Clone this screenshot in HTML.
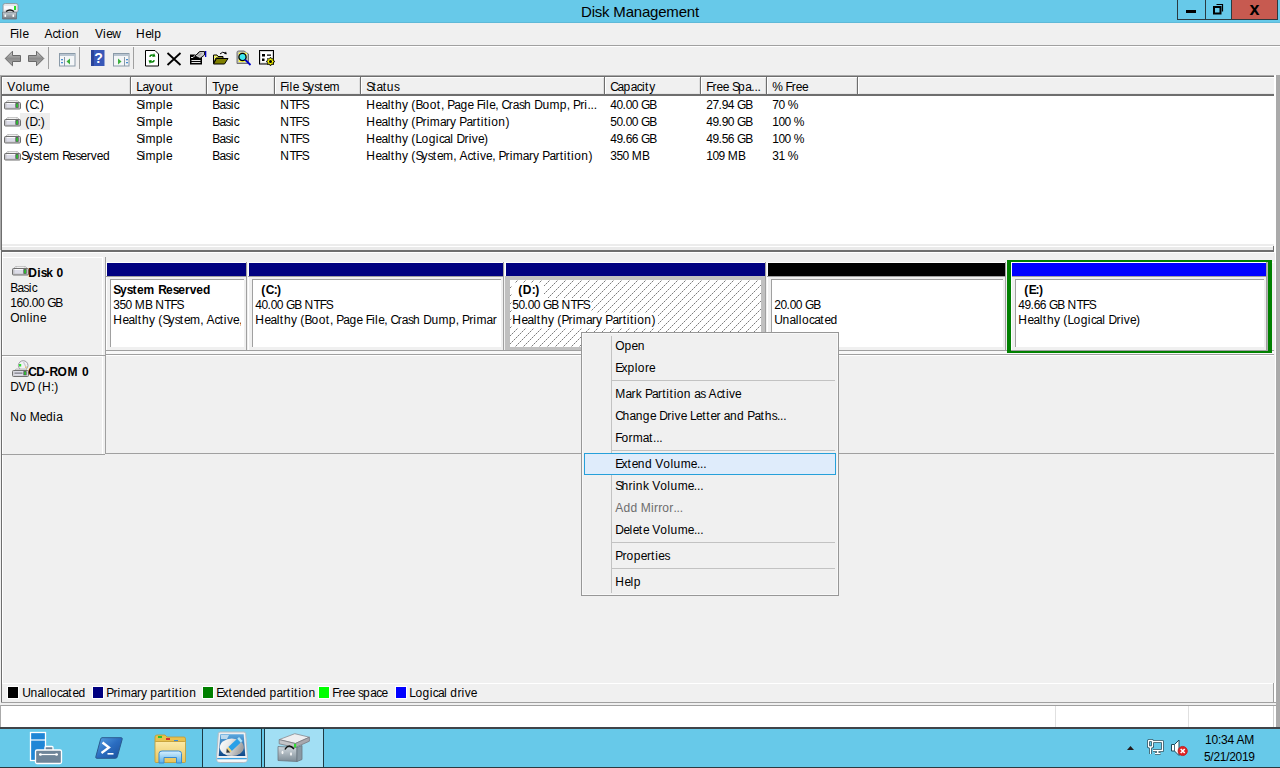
<!DOCTYPE html>
<html><head><meta charset="utf-8">
<style>
*{margin:0;padding:0;box-sizing:border-box}
html,body{width:1280px;height:768px;overflow:hidden;background:#f0f0f0;font-family:"Liberation Sans",sans-serif;font-size:12px;color:#000}
.a{position:absolute}
.t{position:absolute;white-space:nowrap;line-height:14px;font-size:12px}
.b{font-weight:bold}
svg{position:absolute;overflow:visible}
</style></head><body>

<div class="a" style="left:0px;top:0px;width:1280px;height:23px;background:#67c9e9"></div>
<div class="a" style="left:0px;top:22px;width:1280px;height:1px;background:#5fb9d8"></div>
<div class="t" style="left:581px;top:3px;font-size:15px;line-height:18px;letter-spacing:-0.2px">Disk Management</div>
<div class="a" style="left:1177px;top:0px;width:28px;height:20px;border-left:1px solid #2a3a40;border-bottom:1px solid #2a3a40;background:#67c9e9"></div>
<div class="a" style="left:1205px;top:0px;width:26px;height:20px;border-left:1px solid #2a3a40;border-bottom:1px solid #2a3a40;background:#67c9e9"></div>
<div class="a" style="left:1231px;top:0px;width:47px;height:20px;border:1px solid #2a3a40;border-top:none;background:#c75a50"></div>
<div class="a" style="left:1186px;top:10px;width:10px;height:3px;background:#000"></div>
<svg style="left:1212px;top:3px" width="13" height="13"><path d="M4.5 1.5 H10.5 V8.5" fill="none" stroke="#000" stroke-width="1.2"/><rect x="2" y="4" width="6.5" height="6.5" fill="none" stroke="#000" stroke-width="2"/></svg>
<div class="t b" style="left:1249.5px;top:-1px;font-size:18px;line-height:20px;font-weight:bold">x</div>
<svg style="left:1px;top:2px" width="19" height="18">
<defs><linearGradient id="tig" x1="0" y1="0" x2="0" y2="1"><stop offset="0" stop-color="#c8d0d6"/><stop offset="1" stop-color="#707880"/></linearGradient></defs>
<path d="M1.5 10 H15.5 V17 H1.5Z" fill="url(#tig)" stroke="#68727a" stroke-width="0.8"/>
<rect x="3.5" y="12.5" width="1.6" height="2.4" fill="#fff"/><rect x="11.5" y="12.5" width="1.6" height="2.4" fill="#fff"/>
<path d="M2 3 Q2 1.5 4.5 1.5 H14.5 Q17 1.5 17 3 V9 Q17 10 16 10 H2.5 Q2 10 2 9Z" fill="#e4e6ea" stroke="#8a9096" stroke-width="0.8"/>
<path d="M3 4 H14 V7.5 H3Z" fill="#f8f8fc"/>
<path d="M5 9.5 Q9 6.5 13 9.5" fill="none" stroke="#111" stroke-width="1.4"/>
<rect x="13" y="4" width="2" height="4" fill="#28e028"/>
</svg>
<div class="a" style="left:0px;top:23px;width:1280px;height:22px;background:#f0f0f0"></div>
<div class="a" style="left:0px;top:45px;width:1280px;height:1px;background:#a0a0a0"></div>
<div class="a" style="left:0px;top:46px;width:1280px;height:1px;background:#fff"></div>
<div class="t" style="left:10.0px;top:27px;"><span style="letter-spacing:-1.20px">F</span><span style="letter-spacing:0.45px">il</span><span style="letter-spacing:-0.55px">e</span></div>
<div class="t" style="left:44.5px;top:27px;"><span style="letter-spacing:0.10px">A</span><span style="letter-spacing:-0.90px">c</span><span style="letter-spacing:0.80px">t</span><span style="letter-spacing:0.45px">ion</span></div>
<div class="t" style="left:95.0px;top:27px;"><span style="letter-spacing:0.10px">V</span><span style="letter-spacing:0.45px">i</span><span style="letter-spacing:-0.55px">e</span><span style="letter-spacing:0.45px">w</span></div>
<div class="t" style="left:136.0px;top:27px;"><span style="letter-spacing:0.45px">H</span><span style="letter-spacing:-0.55px">e</span><span style="letter-spacing:0.45px">lp</span></div>
<div class="a" style="left:48px;top:47px;width:1px;height:22px;background:#a0a0a0"></div>
<div class="a" style="left:79px;top:47px;width:1px;height:22px;background:#a0a0a0"></div>
<div class="a" style="left:133px;top:47px;width:1px;height:22px;background:#a0a0a0"></div>
<svg style="left:4px;top:50px" width="18" height="17"><defs><linearGradient id="arg" x1="0" y1="0" x2="0" y2="1"><stop offset="0" stop-color="#d0d0d0"/><stop offset="0.5" stop-color="#8c8c8c"/><stop offset="1" stop-color="#b0b0b0"/></linearGradient></defs><path d="M1.2 8.5 L8.5 1.2 V5.5 H16.5 V11.5 H8.5 V15.8 Z" fill="url(#arg)" stroke="#6a6a6a" stroke-width="1"/></svg>
<svg style="left:27px;top:50px" width="18" height="17"><path d="M16.8 8.5 L9.5 1.2 V5.5 H1.5 V11.5 H9.5 V15.8 Z" fill="url(#arg)" stroke="#6a6a6a" stroke-width="1"/></svg>
<svg style="left:59px;top:53px" width="17" height="14"><rect x="0.5" y="0.5" width="15.5" height="12.5" fill="#f4f6f8" stroke="#8a9aa8"/><rect x="1" y="1" width="15" height="2" fill="#b8c4d0"/><line x1="5.5" y1="4" x2="5.5" y2="13" stroke="#8a9aa8"/><rect x="2" y="6" width="2" height="1.3" fill="#4a8fd0"/><rect x="2" y="9" width="2" height="1.3" fill="#4a8fd0"/><path d="M11 5.5 L7.5 8.5 L11 11.5Z" fill="#3cb03c"/></svg>
<svg style="left:91px;top:50px" width="14" height="16"><rect x="0" y="0" width="13.5" height="16" fill="#3858b8"/><rect x="0" y="0" width="3" height="16" fill="#2a449a"/><text x="7.5" y="13" font-family="Liberation Sans" font-size="14" font-weight="bold" fill="#fff" text-anchor="middle">?</text></svg>
<svg style="left:113px;top:53px" width="17" height="14"><rect x="0.5" y="0.5" width="15.5" height="12.5" fill="#f4f6f8" stroke="#8a9aa8"/><rect x="1" y="1" width="15" height="2" fill="#b8c4d0"/><line x1="11.5" y1="4" x2="11.5" y2="13" stroke="#8a9aa8"/><rect x="13" y="6" width="2" height="1.3" fill="#4a8fd0"/><rect x="13" y="9" width="2" height="1.3" fill="#4a8fd0"/><path d="M5 5.5 L8.5 8.5 L5 11.5Z" fill="#3cb03c"/></svg>
<svg style="left:145px;top:50px" width="15" height="17"><path d="M0.5 0.5 H10 L13.5 4 V16 H0.5 Z" fill="#fff" stroke="#000" stroke-width="1"/><path d="M4 6.5 Q5 3.5 8.5 4.5 L9 3 L10.5 6.5 L7 7 L8 5.8 Q6 5.2 5.5 7z" fill="#008000"/><path d="M10 10.5 Q9 13.5 5.5 12.5 L5 14 L3.5 10.5 L7 10 L6 11.2 Q8 11.8 8.5 10z" fill="#008000"/></svg>
<svg style="left:166px;top:52px" width="16" height="14"><path d="M1.5 1 L14.5 13 M14.5 1 L1.5 13" stroke="#000" stroke-width="1.8"/></svg>
<svg style="left:189px;top:50px" width="18" height="16">
<rect x="1" y="4.5" width="12" height="10" fill="#000"/>
<path d="M2.5 10.5 H11.5 M2.5 12.5 H11.5" stroke="#fff" stroke-width="0.9"/>
<path d="M2 7.5 L4 7.5 L8.5 3 L11 5.5 L10 7.5 H11.5" fill="none" stroke="#fff" stroke-width="0.9"/>
<path d="M6 6 L10.5 1.5 H15.5 V5 L11 8.5Z" fill="#c8c8c8" stroke="#000" stroke-width="0.9"/>
<path d="M8 5 L11 2 M9.5 6 L12.5 3" stroke="#777" stroke-width="0.8"/>
<rect x="16" y="1" width="1.3" height="6" fill="#0000c0"/>
</svg>
<svg style="left:212px;top:50px" width="18" height="16">
<defs><pattern id="ydot" width="2" height="2" patternUnits="userSpaceOnUse"><rect width="2" height="2" fill="#ffff40"/><rect width="1" height="1" fill="#d8d8d8"/></pattern></defs>
<path d="M1.5 5 H5 L6 6.5 H11 V8 H4 L1.5 13.5Z" fill="url(#ydot)" stroke="#000" stroke-width="1"/>
<path d="M1.5 14 L4.5 8.5 H16 L12.5 14Z" fill="#808000" stroke="#000" stroke-width="1"/>
<path d="M8 4 Q10.5 1 13.5 3" fill="none" stroke="#000" stroke-width="1"/>
<path d="M12 4 L14.8 4.2 L14 1.6Z" fill="#000"/>
</svg>
<svg style="left:236px;top:50px" width="17" height="17">
<path d="M1 2.5 Q1 1 2.5 1 H8 L12.5 4 V13.5 H1Z" fill="#b8b8b8" stroke="#666" stroke-width="0.9"/>
<rect x="2.5" y="2.5" width="8.5" height="9.5" fill="url(#ydot)"/>
<circle cx="6.5" cy="7" r="3.6" fill="#40e8f0" stroke="#000" stroke-width="1.3"/>
<path d="M9 9.5 L14.5 15" stroke="#0000c8" stroke-width="1.8"/>
</svg>
<svg style="left:259px;top:50px" width="18" height="16">
<rect x="0.5" y="0.5" width="14" height="13.5" fill="#d4d4d4" stroke="#000" stroke-width="1"/>
<rect x="2" y="2" width="11" height="10.5" fill="#fff"/>
<path d="M3 4 H6 V6.5 H3Z M8 4.5 H12 V5.8 H8Z M3 8.5 H5.5 V11 H3Z" fill="#000"/>
<path d="M11.5 7 L12.5 9 L14.5 8.5 L14 10.5 L16 11.5 L14 12.5 L14.5 14.5 L12.5 14 L11.5 16 L10.5 14 L8.5 14.5 L9 12.5 L7 11.5 L9 10.5 L8.5 8.5 L10.5 9Z" fill="#ffff00" stroke="#000" stroke-width="0.8"/>
<circle cx="11.5" cy="11.5" r="1.5" fill="#000"/>
</svg>
<div class="a" style="left:0px;top:75px;width:1px;height:175px;background:#aaa"></div>
<div class="a" style="left:1px;top:75px;width:1275px;height:1px;background:#aaa"></div>
<div class="a" style="left:1px;top:76px;width:1274px;height:1px;background:#6e6e6e"></div>
<div class="a" style="left:1px;top:76px;width:1px;height:174px;background:#6e6e6e"></div>
<div class="a" style="left:2px;top:77px;width:1273px;height:173px;background:#fff"></div>
<div class="a" style="left:3px;top:78px;width:1271px;height:16px;background:#f0f0f0"></div>
<div class="a" style="left:2px;top:94px;width:1272px;height:2px;background:#6e6e6e"></div>
<div class="a" style="left:1274px;top:75px;width:2px;height:175px;background:#fff"></div>
<div class="a" style="left:1276px;top:75px;width:4px;height:693px;background:#aaa"></div>
<div class="a" style="left:3px;top:77px;width:1271px;height:1px;background:#fff"></div>
<div class="a" style="left:2px;top:78px;width:1px;height:16px;background:#fff"></div>
<div class="a" style="left:3px;top:93px;width:1271px;height:1px;background:#e6e6e6"></div>
<div class="a" style="left:129px;top:78px;width:1px;height:16px;background:#dcdcdc"></div>
<div class="a" style="left:130px;top:77px;width:1px;height:17px;background:#6e6e6e"></div>
<div class="a" style="left:131px;top:77px;width:1px;height:17px;background:#fff"></div>
<div class="a" style="left:205px;top:78px;width:1px;height:16px;background:#dcdcdc"></div>
<div class="a" style="left:206px;top:77px;width:1px;height:17px;background:#6e6e6e"></div>
<div class="a" style="left:207px;top:77px;width:1px;height:17px;background:#fff"></div>
<div class="a" style="left:273px;top:78px;width:1px;height:16px;background:#dcdcdc"></div>
<div class="a" style="left:274px;top:77px;width:1px;height:17px;background:#6e6e6e"></div>
<div class="a" style="left:275px;top:77px;width:1px;height:17px;background:#fff"></div>
<div class="a" style="left:359px;top:78px;width:1px;height:16px;background:#dcdcdc"></div>
<div class="a" style="left:360px;top:77px;width:1px;height:17px;background:#6e6e6e"></div>
<div class="a" style="left:361px;top:77px;width:1px;height:17px;background:#fff"></div>
<div class="a" style="left:603px;top:78px;width:1px;height:16px;background:#dcdcdc"></div>
<div class="a" style="left:604px;top:77px;width:1px;height:17px;background:#6e6e6e"></div>
<div class="a" style="left:605px;top:77px;width:1px;height:17px;background:#fff"></div>
<div class="a" style="left:699px;top:78px;width:1px;height:16px;background:#dcdcdc"></div>
<div class="a" style="left:700px;top:77px;width:1px;height:17px;background:#6e6e6e"></div>
<div class="a" style="left:701px;top:77px;width:1px;height:17px;background:#fff"></div>
<div class="a" style="left:765px;top:78px;width:1px;height:16px;background:#dcdcdc"></div>
<div class="a" style="left:766px;top:77px;width:1px;height:17px;background:#6e6e6e"></div>
<div class="a" style="left:767px;top:77px;width:1px;height:17px;background:#fff"></div>
<div class="a" style="left:856px;top:78px;width:1px;height:16px;background:#dcdcdc"></div>
<div class="a" style="left:857px;top:77px;width:1px;height:17px;background:#6e6e6e"></div>
<div class="a" style="left:858px;top:77px;width:1px;height:17px;background:#fff"></div>
<div class="t" style="left:7.3px;top:80px;"><span style="letter-spacing:0.10px">V</span><span style="letter-spacing:0.45px">olu</span><span style="letter-spacing:0.10px">m</span><span style="letter-spacing:-0.55px">e</span></div>
<div class="t" style="left:136.3px;top:80px;"><span style="letter-spacing:-0.55px">La</span><span style="letter-spacing:0.10px">y</span><span style="letter-spacing:0.45px">ou</span><span style="letter-spacing:0.80px">t</span></div>
<div class="t" style="left:212.3px;top:80px;"><span style="letter-spacing:-1.20px">T</span><span style="letter-spacing:0.10px">y</span><span style="letter-spacing:0.45px">p</span><span style="letter-spacing:-0.55px">e</span></div>
<div class="t" style="left:280.3px;top:80px;"><span style="letter-spacing:-1.20px">F</span><span style="letter-spacing:0.45px">il</span><span style="letter-spacing:-0.55px">e</span><span style="letter-spacing:-0.20px"> </span><span style="letter-spacing:-1.90px">S</span><span style="letter-spacing:0.10px">y</span><span style="letter-spacing:-0.90px">s</span><span style="letter-spacing:0.80px">t</span><span style="letter-spacing:-0.55px">e</span><span style="letter-spacing:0.10px">m</span></div>
<div class="t" style="left:366.3px;top:80px;"><span style="letter-spacing:-1.90px">S</span><span style="letter-spacing:0.80px">t</span><span style="letter-spacing:-0.55px">a</span><span style="letter-spacing:0.80px">t</span><span style="letter-spacing:0.45px">u</span><span style="letter-spacing:-0.90px">s</span></div>
<div class="t" style="left:610.3px;top:80px;"><span style="letter-spacing:-1.55px">C</span><span style="letter-spacing:-0.55px">a</span><span style="letter-spacing:0.45px">p</span><span style="letter-spacing:-0.55px">a</span><span style="letter-spacing:-0.90px">c</span><span style="letter-spacing:0.45px">i</span><span style="letter-spacing:0.80px">t</span><span style="letter-spacing:0.10px">y</span></div>
<div class="t" style="left:706.3px;top:80px;"><span style="letter-spacing:-1.20px">F</span><span style="letter-spacing:0.10px">r</span><span style="letter-spacing:-0.55px">ee</span><span style="letter-spacing:-0.20px"> </span><span style="letter-spacing:-1.90px">S</span><span style="letter-spacing:0.45px">p</span><span style="letter-spacing:-0.55px">a</span><span style="letter-spacing:-0.20px">...</span></div>
<div class="t" style="left:772.3px;top:80px;"><span style="letter-spacing:-0.55px">%</span><span style="letter-spacing:-0.20px"> </span><span style="letter-spacing:-1.20px">F</span><span style="letter-spacing:0.10px">r</span><span style="letter-spacing:-0.55px">ee</span></div>
<div class="a" style="left:20px;top:113px;width:30px;height:17px;background:#eeeeee"></div>
<svg style="left:4px;top:100px" width="17" height="10"><path d="M3.5 0.5 H13.5 L15.5 2.5 H1.5Z" fill="#e0e0e0" stroke="#b4b4b4" stroke-width="0.8"/><path d="M5 1.3 H12" stroke="#fafafa" stroke-width="0.8"/><rect x="0.5" y="2.5" width="16" height="6.5" rx="1" fill="#c4c4c8" stroke="#707070" stroke-width="1"/><rect x="2.5" y="3.2" width="9" height="4.3" fill="#dcdce8"/><path d="M2.5 3.5 H11.5" stroke="#fff" stroke-width="0.9"/><rect x="11.5" y="3.2" width="3" height="4.5" fill="#3a3040"/><rect x="12.3" y="3.6" width="1.5" height="3.8" fill="#30e030"/></svg>
<div class="t" style="left:25.3px;top:98px;"><span style="letter-spacing:0.10px">(</span><span style="letter-spacing:-1.55px">C</span><span style="letter-spacing:-0.20px">:</span><span style="letter-spacing:0.10px">)</span></div>
<div class="t" style="left:136.3px;top:98px;"><span style="letter-spacing:-1.90px">S</span><span style="letter-spacing:0.45px">i</span><span style="letter-spacing:0.10px">m</span><span style="letter-spacing:0.45px">pl</span><span style="letter-spacing:-0.55px">e</span></div>
<div class="t" style="left:212.3px;top:98px;"><span style="letter-spacing:-0.90px">B</span><span style="letter-spacing:-0.55px">a</span><span style="letter-spacing:-0.90px">s</span><span style="letter-spacing:0.45px">i</span><span style="letter-spacing:-0.90px">c</span></div>
<div class="t" style="left:280.3px;top:98px;"><span style="letter-spacing:0.45px">N</span><span style="letter-spacing:-1.20px">TF</span><span style="letter-spacing:-1.90px">S</span></div>
<div class="t" style="left:366.3px;top:98px;"><span style="letter-spacing:0.45px">H</span><span style="letter-spacing:-0.55px">ea</span><span style="letter-spacing:0.45px">l</span><span style="letter-spacing:0.80px">t</span><span style="letter-spacing:0.45px">h</span><span style="letter-spacing:0.10px">y</span><span style="letter-spacing:-0.20px"> </span><span style="letter-spacing:0.10px">(</span><span style="letter-spacing:-0.90px">B</span><span style="letter-spacing:0.45px">oo</span><span style="letter-spacing:0.80px">t</span><span style="letter-spacing:-0.20px">, </span><span style="letter-spacing:-0.90px">P</span><span style="letter-spacing:-0.55px">a</span><span style="letter-spacing:0.45px">g</span><span style="letter-spacing:-0.55px">e</span><span style="letter-spacing:-0.20px"> </span><span style="letter-spacing:-1.20px">F</span><span style="letter-spacing:0.45px">il</span><span style="letter-spacing:-0.55px">e</span><span style="letter-spacing:-0.20px">, </span><span style="letter-spacing:-1.55px">C</span><span style="letter-spacing:0.10px">r</span><span style="letter-spacing:-0.55px">a</span><span style="letter-spacing:-0.90px">s</span><span style="letter-spacing:0.45px">h</span><span style="letter-spacing:-0.20px"> </span><span style="letter-spacing:-0.55px">D</span><span style="letter-spacing:0.45px">u</span><span style="letter-spacing:0.10px">m</span><span style="letter-spacing:0.45px">p</span><span style="letter-spacing:-0.20px">, </span><span style="letter-spacing:-0.90px">P</span><span style="letter-spacing:0.10px">r</span><span style="letter-spacing:0.45px">i</span><span style="letter-spacing:-0.20px">...</span></div>
<div class="t" style="left:610.3px;top:98px;"><span style="letter-spacing:-0.55px">40</span><span style="letter-spacing:-0.20px">.</span><span style="letter-spacing:-0.55px">00</span><span style="letter-spacing:-0.20px"> </span><span style="letter-spacing:-1.20px">G</span><span style="letter-spacing:-0.90px">B</span></div>
<div class="t" style="left:706.3px;top:98px;"><span style="letter-spacing:-0.55px">27</span><span style="letter-spacing:-0.20px">.</span><span style="letter-spacing:-0.55px">94</span><span style="letter-spacing:-0.20px"> </span><span style="letter-spacing:-1.20px">G</span><span style="letter-spacing:-0.90px">B</span></div>
<div class="t" style="left:772.3px;top:98px;"><span style="letter-spacing:-0.55px">70</span><span style="letter-spacing:-0.20px"> </span><span style="letter-spacing:-0.55px">%</span></div>
<svg style="left:4px;top:117px" width="17" height="10"><path d="M3.5 0.5 H13.5 L15.5 2.5 H1.5Z" fill="#e0e0e0" stroke="#b4b4b4" stroke-width="0.8"/><path d="M5 1.3 H12" stroke="#fafafa" stroke-width="0.8"/><rect x="0.5" y="2.5" width="16" height="6.5" rx="1" fill="#c4c4c8" stroke="#707070" stroke-width="1"/><rect x="2.5" y="3.2" width="9" height="4.3" fill="#dcdce8"/><path d="M2.5 3.5 H11.5" stroke="#fff" stroke-width="0.9"/><rect x="11.5" y="3.2" width="3" height="4.5" fill="#3a3040"/><rect x="12.3" y="3.6" width="1.5" height="3.8" fill="#30e030"/></svg>
<div class="t" style="left:25.3px;top:115px;"><span style="letter-spacing:0.10px">(</span><span style="letter-spacing:-0.55px">D</span><span style="letter-spacing:-0.20px">:</span><span style="letter-spacing:0.10px">)</span></div>
<div class="t" style="left:136.3px;top:115px;"><span style="letter-spacing:-1.90px">S</span><span style="letter-spacing:0.45px">i</span><span style="letter-spacing:0.10px">m</span><span style="letter-spacing:0.45px">pl</span><span style="letter-spacing:-0.55px">e</span></div>
<div class="t" style="left:212.3px;top:115px;"><span style="letter-spacing:-0.90px">B</span><span style="letter-spacing:-0.55px">a</span><span style="letter-spacing:-0.90px">s</span><span style="letter-spacing:0.45px">i</span><span style="letter-spacing:-0.90px">c</span></div>
<div class="t" style="left:280.3px;top:115px;"><span style="letter-spacing:0.45px">N</span><span style="letter-spacing:-1.20px">TF</span><span style="letter-spacing:-1.90px">S</span></div>
<div class="t" style="left:366.3px;top:115px;"><span style="letter-spacing:0.45px">H</span><span style="letter-spacing:-0.55px">ea</span><span style="letter-spacing:0.45px">l</span><span style="letter-spacing:0.80px">t</span><span style="letter-spacing:0.45px">h</span><span style="letter-spacing:0.10px">y</span><span style="letter-spacing:-0.20px"> </span><span style="letter-spacing:0.10px">(</span><span style="letter-spacing:-0.90px">P</span><span style="letter-spacing:0.10px">r</span><span style="letter-spacing:0.45px">i</span><span style="letter-spacing:0.10px">m</span><span style="letter-spacing:-0.55px">a</span><span style="letter-spacing:0.10px">ry</span><span style="letter-spacing:-0.20px"> </span><span style="letter-spacing:-0.90px">P</span><span style="letter-spacing:-0.55px">a</span><span style="letter-spacing:0.10px">r</span><span style="letter-spacing:0.80px">t</span><span style="letter-spacing:0.45px">i</span><span style="letter-spacing:0.80px">t</span><span style="letter-spacing:0.45px">ion</span><span style="letter-spacing:0.10px">)</span></div>
<div class="t" style="left:610.3px;top:115px;"><span style="letter-spacing:-0.55px">50</span><span style="letter-spacing:-0.20px">.</span><span style="letter-spacing:-0.55px">00</span><span style="letter-spacing:-0.20px"> </span><span style="letter-spacing:-1.20px">G</span><span style="letter-spacing:-0.90px">B</span></div>
<div class="t" style="left:706.3px;top:115px;"><span style="letter-spacing:-0.55px">49</span><span style="letter-spacing:-0.20px">.</span><span style="letter-spacing:-0.55px">90</span><span style="letter-spacing:-0.20px"> </span><span style="letter-spacing:-1.20px">G</span><span style="letter-spacing:-0.90px">B</span></div>
<div class="t" style="left:772.3px;top:115px;"><span style="letter-spacing:-0.55px">100</span><span style="letter-spacing:-0.20px"> </span><span style="letter-spacing:-0.55px">%</span></div>
<svg style="left:4px;top:134px" width="17" height="10"><path d="M3.5 0.5 H13.5 L15.5 2.5 H1.5Z" fill="#e0e0e0" stroke="#b4b4b4" stroke-width="0.8"/><path d="M5 1.3 H12" stroke="#fafafa" stroke-width="0.8"/><rect x="0.5" y="2.5" width="16" height="6.5" rx="1" fill="#c4c4c8" stroke="#707070" stroke-width="1"/><rect x="2.5" y="3.2" width="9" height="4.3" fill="#dcdce8"/><path d="M2.5 3.5 H11.5" stroke="#fff" stroke-width="0.9"/><rect x="11.5" y="3.2" width="3" height="4.5" fill="#3a3040"/><rect x="12.3" y="3.6" width="1.5" height="3.8" fill="#30e030"/></svg>
<div class="t" style="left:25.3px;top:132px;"><span style="letter-spacing:0.10px">(</span><span style="letter-spacing:-1.90px">E</span><span style="letter-spacing:-0.20px">:</span><span style="letter-spacing:0.10px">)</span></div>
<div class="t" style="left:136.3px;top:132px;"><span style="letter-spacing:-1.90px">S</span><span style="letter-spacing:0.45px">i</span><span style="letter-spacing:0.10px">m</span><span style="letter-spacing:0.45px">pl</span><span style="letter-spacing:-0.55px">e</span></div>
<div class="t" style="left:212.3px;top:132px;"><span style="letter-spacing:-0.90px">B</span><span style="letter-spacing:-0.55px">a</span><span style="letter-spacing:-0.90px">s</span><span style="letter-spacing:0.45px">i</span><span style="letter-spacing:-0.90px">c</span></div>
<div class="t" style="left:280.3px;top:132px;"><span style="letter-spacing:0.45px">N</span><span style="letter-spacing:-1.20px">TF</span><span style="letter-spacing:-1.90px">S</span></div>
<div class="t" style="left:366.3px;top:132px;"><span style="letter-spacing:0.45px">H</span><span style="letter-spacing:-0.55px">ea</span><span style="letter-spacing:0.45px">l</span><span style="letter-spacing:0.80px">t</span><span style="letter-spacing:0.45px">h</span><span style="letter-spacing:0.10px">y</span><span style="letter-spacing:-0.20px"> </span><span style="letter-spacing:0.10px">(</span><span style="letter-spacing:-0.55px">L</span><span style="letter-spacing:0.45px">ogi</span><span style="letter-spacing:-0.90px">c</span><span style="letter-spacing:-0.55px">a</span><span style="letter-spacing:0.45px">l</span><span style="letter-spacing:-0.20px"> </span><span style="letter-spacing:-0.55px">D</span><span style="letter-spacing:0.10px">r</span><span style="letter-spacing:0.45px">i</span><span style="letter-spacing:0.10px">v</span><span style="letter-spacing:-0.55px">e</span><span style="letter-spacing:0.10px">)</span></div>
<div class="t" style="left:610.3px;top:132px;"><span style="letter-spacing:-0.55px">49</span><span style="letter-spacing:-0.20px">.</span><span style="letter-spacing:-0.55px">66</span><span style="letter-spacing:-0.20px"> </span><span style="letter-spacing:-1.20px">G</span><span style="letter-spacing:-0.90px">B</span></div>
<div class="t" style="left:706.3px;top:132px;"><span style="letter-spacing:-0.55px">49</span><span style="letter-spacing:-0.20px">.</span><span style="letter-spacing:-0.55px">56</span><span style="letter-spacing:-0.20px"> </span><span style="letter-spacing:-1.20px">G</span><span style="letter-spacing:-0.90px">B</span></div>
<div class="t" style="left:772.3px;top:132px;"><span style="letter-spacing:-0.55px">100</span><span style="letter-spacing:-0.20px"> </span><span style="letter-spacing:-0.55px">%</span></div>
<svg style="left:4px;top:151px" width="17" height="10"><path d="M3.5 0.5 H13.5 L15.5 2.5 H1.5Z" fill="#e0e0e0" stroke="#b4b4b4" stroke-width="0.8"/><path d="M5 1.3 H12" stroke="#fafafa" stroke-width="0.8"/><rect x="0.5" y="2.5" width="16" height="6.5" rx="1" fill="#c4c4c8" stroke="#707070" stroke-width="1"/><rect x="2.5" y="3.2" width="9" height="4.3" fill="#dcdce8"/><path d="M2.5 3.5 H11.5" stroke="#fff" stroke-width="0.9"/><rect x="11.5" y="3.2" width="3" height="4.5" fill="#3a3040"/><rect x="12.3" y="3.6" width="1.5" height="3.8" fill="#30e030"/></svg>
<div class="t" style="left:21.3px;top:149px;"><span style="letter-spacing:-1.90px">S</span><span style="letter-spacing:0.10px">y</span><span style="letter-spacing:-0.90px">s</span><span style="letter-spacing:0.80px">t</span><span style="letter-spacing:-0.55px">e</span><span style="letter-spacing:0.10px">m</span><span style="letter-spacing:-0.20px"> </span><span style="letter-spacing:-1.55px">R</span><span style="letter-spacing:-0.55px">e</span><span style="letter-spacing:-0.90px">s</span><span style="letter-spacing:-0.55px">e</span><span style="letter-spacing:0.10px">rv</span><span style="letter-spacing:-0.55px">e</span><span style="letter-spacing:0.45px">d</span></div>
<div class="t" style="left:136.3px;top:149px;"><span style="letter-spacing:-1.90px">S</span><span style="letter-spacing:0.45px">i</span><span style="letter-spacing:0.10px">m</span><span style="letter-spacing:0.45px">pl</span><span style="letter-spacing:-0.55px">e</span></div>
<div class="t" style="left:212.3px;top:149px;"><span style="letter-spacing:-0.90px">B</span><span style="letter-spacing:-0.55px">a</span><span style="letter-spacing:-0.90px">s</span><span style="letter-spacing:0.45px">i</span><span style="letter-spacing:-0.90px">c</span></div>
<div class="t" style="left:280.3px;top:149px;"><span style="letter-spacing:0.45px">N</span><span style="letter-spacing:-1.20px">TF</span><span style="letter-spacing:-1.90px">S</span></div>
<div class="t" style="left:366.3px;top:149px;"><span style="letter-spacing:0.45px">H</span><span style="letter-spacing:-0.55px">ea</span><span style="letter-spacing:0.45px">l</span><span style="letter-spacing:0.80px">t</span><span style="letter-spacing:0.45px">h</span><span style="letter-spacing:0.10px">y</span><span style="letter-spacing:-0.20px"> </span><span style="letter-spacing:0.10px">(</span><span style="letter-spacing:-1.90px">S</span><span style="letter-spacing:0.10px">y</span><span style="letter-spacing:-0.90px">s</span><span style="letter-spacing:0.80px">t</span><span style="letter-spacing:-0.55px">e</span><span style="letter-spacing:0.10px">m</span><span style="letter-spacing:-0.20px">, </span><span style="letter-spacing:0.10px">A</span><span style="letter-spacing:-0.90px">c</span><span style="letter-spacing:0.80px">t</span><span style="letter-spacing:0.45px">i</span><span style="letter-spacing:0.10px">v</span><span style="letter-spacing:-0.55px">e</span><span style="letter-spacing:-0.20px">, </span><span style="letter-spacing:-0.90px">P</span><span style="letter-spacing:0.10px">r</span><span style="letter-spacing:0.45px">i</span><span style="letter-spacing:0.10px">m</span><span style="letter-spacing:-0.55px">a</span><span style="letter-spacing:0.10px">ry</span><span style="letter-spacing:-0.20px"> </span><span style="letter-spacing:-0.90px">P</span><span style="letter-spacing:-0.55px">a</span><span style="letter-spacing:0.10px">r</span><span style="letter-spacing:0.80px">t</span><span style="letter-spacing:0.45px">i</span><span style="letter-spacing:0.80px">t</span><span style="letter-spacing:0.45px">ion</span><span style="letter-spacing:0.10px">)</span></div>
<div class="t" style="left:610.3px;top:149px;"><span style="letter-spacing:-0.55px">350</span><span style="letter-spacing:-0.20px"> </span><span style="letter-spacing:0.10px">M</span><span style="letter-spacing:-0.90px">B</span></div>
<div class="t" style="left:706.3px;top:149px;"><span style="letter-spacing:-0.55px">109</span><span style="letter-spacing:-0.20px"> </span><span style="letter-spacing:0.10px">M</span><span style="letter-spacing:-0.90px">B</span></div>
<div class="t" style="left:772.3px;top:149px;"><span style="letter-spacing:-0.55px">31</span><span style="letter-spacing:-0.20px"> </span><span style="letter-spacing:-0.55px">%</span></div>
<div class="a" style="left:2px;top:244px;width:1273px;height:2px;background:#ececec"></div>
<div class="a" style="left:2px;top:246px;width:1273px;height:1px;background:#fff"></div>
<div class="a" style="left:2px;top:247px;width:1273px;height:3px;background:#eaeaea"></div>
<div class="a" style="left:1px;top:250px;width:1273px;height:2px;background:#6e6e6e"></div>
<div class="a" style="left:1273px;top:246px;width:1px;height:6px;background:#6e6e6e"></div>
<div class="a" style="left:1274px;top:75px;width:2px;height:652px;background:#fff"></div>
<div class="a" style="left:2px;top:252px;width:1273px;height:431px;background:#f0f0f0"></div>
<div class="a" style="left:2px;top:252px;width:1273px;height:1px;background:#fff"></div>
<div class="a" style="left:1px;top:252px;width:1px;height:451px;background:#6e6e6e"></div>
<div class="a" style="left:2px;top:253px;width:1px;height:430px;background:#fff"></div>
<div class="a" style="left:3px;top:257px;width:100px;height:1px;background:#fff"></div>
<div class="a" style="left:102px;top:257px;width:1px;height:98px;background:#fff"></div>
<div class="a" style="left:2px;top:355px;width:103px;height:1px;background:#a0a0a0"></div>
<div class="a" style="left:3px;top:356px;width:100px;height:1px;background:#fff"></div>
<div class="a" style="left:105px;top:257px;width:1px;height:197px;background:#a0a0a0"></div>
<div class="a" style="left:106px;top:262px;width:1168px;height:1px;background:#fff"></div>
<div class="a" style="left:106px;top:262px;width:1px;height:88px;background:#fff"></div>
<div class="a" style="left:107px;top:263px;width:139px;height:13px;background:#000080"></div>
<div class="a" style="left:106px;top:276px;width:140px;height:1px;background:#a0a0a0"></div>
<div class="a" style="left:246px;top:262px;width:1px;height:89px;background:#a0a0a0"></div>
<div class="a" style="left:110px;top:279px;width:134px;height:68px;background:#fff;border-top:1px solid #a0a0a0;border-left:1px solid #a0a0a0"></div>
<div class="a" style="left:248px;top:262px;width:1px;height:88px;background:#fff"></div>
<div class="a" style="left:249px;top:263px;width:254px;height:13px;background:#000080"></div>
<div class="a" style="left:248px;top:276px;width:255px;height:1px;background:#a0a0a0"></div>
<div class="a" style="left:503px;top:262px;width:1px;height:89px;background:#a0a0a0"></div>
<div class="a" style="left:252px;top:279px;width:249px;height:68px;background:#fff;border-top:1px solid #a0a0a0;border-left:1px solid #a0a0a0"></div>
<div class="a" style="left:505px;top:262px;width:1px;height:88px;background:#fff"></div>
<div class="a" style="left:506px;top:263px;width:259px;height:13px;background:#000080"></div>
<div class="a" style="left:505px;top:276px;width:260px;height:1px;background:#a0a0a0"></div>
<div class="a" style="left:765px;top:262px;width:1px;height:89px;background:#a0a0a0"></div>
<div class="a" style="left:505px;top:276px;width:260px;height:74px;background:#c0c0c0"></div>
<svg style="left:510px;top:280px" width="251" height="67"><defs><pattern id="h" width="8" height="8" patternUnits="userSpaceOnUse"><rect x="0" y="7" width="1" height="1" fill="#7c7c7c"/><rect x="1" y="6" width="1" height="1" fill="#c4c4c4"/><rect x="2" y="5" width="1" height="1" fill="#7c7c7c"/><rect x="3" y="4" width="1" height="1" fill="#c4c4c4"/><rect x="4" y="3" width="1" height="1" fill="#7c7c7c"/><rect x="5" y="2" width="1" height="1" fill="#c4c4c4"/><rect x="6" y="1" width="1" height="1" fill="#7c7c7c"/><rect x="7" y="0" width="1" height="1" fill="#c4c4c4"/></pattern></defs><rect width="100%" height="100%" fill="#fff"/><rect width="100%" height="100%" fill="url(#h)"/></svg>
<div class="a" style="left:767px;top:262px;width:1px;height:88px;background:#fff"></div>
<div class="a" style="left:768px;top:263px;width:237px;height:13px;background:#000000"></div>
<div class="a" style="left:767px;top:276px;width:238px;height:1px;background:#a0a0a0"></div>
<div class="a" style="left:1005px;top:262px;width:1px;height:89px;background:#a0a0a0"></div>
<div class="a" style="left:771px;top:279px;width:232px;height:68px;background:#fff;border-top:1px solid #a0a0a0;border-left:1px solid #a0a0a0"></div>
<div class="a" style="left:1011px;top:262px;width:1px;height:88px;background:#fff"></div>
<div class="a" style="left:1012px;top:263px;width:254px;height:13px;background:#0000ff"></div>
<div class="a" style="left:1011px;top:276px;width:255px;height:1px;background:#a0a0a0"></div>
<div class="a" style="left:1266px;top:262px;width:1px;height:89px;background:#a0a0a0"></div>
<div class="a" style="left:1267px;top:262px;width:1px;height:89px;background:#b4b4b4"></div>
<div class="a" style="left:1015px;top:279px;width:249px;height:68px;background:#fff;border-top:1px solid #a0a0a0;border-left:1px solid #a0a0a0"></div>
<div class="a" style="left:106px;top:350px;width:1168px;height:1px;background:#a0a0a0"></div>
<div class="a" style="left:106px;top:351px;width:1168px;height:3px;background:#f8f8f8"></div>
<div class="a" style="left:106px;top:354px;width:1168px;height:1px;background:#a0a0a0"></div>
<div class="a" style="left:106px;top:355px;width:1168px;height:1px;background:#fff"></div>
<div class="a" style="left:1007px;top:260px;width:265px;height:2px;background:#008000"></div>
<div class="a" style="left:1007px;top:351px;width:265px;height:2px;background:#008000"></div>
<div class="a" style="left:1007px;top:260px;width:4px;height:93px;background:#008000"></div>
<div class="a" style="left:1268px;top:260px;width:4px;height:93px;background:#008000"></div>
<div class="a" style="left:1011px;top:262px;width:1px;height:88px;background:#fff"></div>
<svg style="left:12px;top:266px" width="17" height="10"><path d="M3.5 0.5 H13.5 L15.5 2.5 H1.5Z" fill="#e0e0e0" stroke="#b4b4b4" stroke-width="0.8"/><path d="M5 1.3 H12" stroke="#fafafa" stroke-width="0.8"/><rect x="0.5" y="2.5" width="16" height="6.5" rx="1" fill="#c4c4c8" stroke="#707070" stroke-width="1"/><rect x="2.5" y="3.2" width="9" height="4.3" fill="#dcdce8"/><path d="M2.5 3.5 H11.5" stroke="#fff" stroke-width="0.9"/><rect x="11.5" y="3.2" width="3" height="4.5" fill="#3a3040"/><rect x="12.3" y="3.6" width="1.5" height="3.8" fill="#30e030"/></svg>
<div class="t b" style="left:28.3px;top:266px;"><span style="letter-spacing:0.25px">D</span><span style="letter-spacing:0.10px">i</span><span style="letter-spacing:-1.05px">s</span><span style="letter-spacing:0.05px">k</span><span style="letter-spacing:0.10px"> </span><span style="letter-spacing:0.05px">0</span></div>
<div class="t" style="left:10.3px;top:281px;"><span style="letter-spacing:-0.90px">B</span><span style="letter-spacing:-0.55px">a</span><span style="letter-spacing:-0.90px">s</span><span style="letter-spacing:0.45px">i</span><span style="letter-spacing:-0.90px">c</span></div>
<div class="t" style="left:10.3px;top:296px;"><span style="letter-spacing:-0.55px">160</span><span style="letter-spacing:-0.20px">.</span><span style="letter-spacing:-0.55px">00</span><span style="letter-spacing:-0.20px"> </span><span style="letter-spacing:-1.20px">G</span><span style="letter-spacing:-0.90px">B</span></div>
<div class="t" style="left:10.3px;top:311px;"><span style="letter-spacing:-0.20px">O</span><span style="letter-spacing:0.45px">nlin</span><span style="letter-spacing:-0.55px">e</span></div>
<div class="t" style="left:113.3px;top:283px;width:128px;overflow:hidden"><b><span style="letter-spacing:-1.30px">S</span><span style="letter-spacing:0.05px">y</span><span style="letter-spacing:-1.05px">s</span><span style="letter-spacing:0.50px">t</span><span style="letter-spacing:0.05px">e</span><span style="letter-spacing:0.45px">m</span><span style="letter-spacing:0.10px"> </span><span style="letter-spacing:-0.85px">R</span><span style="letter-spacing:0.05px">e</span><span style="letter-spacing:-1.05px">s</span><span style="letter-spacing:0.05px">e</span><span style="letter-spacing:-0.15px">r</span><span style="letter-spacing:0.05px">ve</span><span style="letter-spacing:0.50px">d</span></b></div>
<div class="t" style="left:113.3px;top:298px;width:128px;overflow:hidden"><span style="letter-spacing:-0.55px">350</span><span style="letter-spacing:-0.20px"> </span><span style="letter-spacing:0.10px">M</span><span style="letter-spacing:-0.90px">B</span><span style="letter-spacing:-0.20px"> </span><span style="letter-spacing:0.45px">N</span><span style="letter-spacing:-1.20px">TF</span><span style="letter-spacing:-1.90px">S</span></div>
<div class="t" style="left:113.3px;top:313px;width:128px;overflow:hidden"><span style="letter-spacing:0.45px">H</span><span style="letter-spacing:-0.55px">ea</span><span style="letter-spacing:0.45px">l</span><span style="letter-spacing:0.80px">t</span><span style="letter-spacing:0.45px">h</span><span style="letter-spacing:0.10px">y</span><span style="letter-spacing:-0.20px"> </span><span style="letter-spacing:0.10px">(</span><span style="letter-spacing:-1.90px">S</span><span style="letter-spacing:0.10px">y</span><span style="letter-spacing:-0.90px">s</span><span style="letter-spacing:0.80px">t</span><span style="letter-spacing:-0.55px">e</span><span style="letter-spacing:0.10px">m</span><span style="letter-spacing:-0.20px">, </span><span style="letter-spacing:0.10px">A</span><span style="letter-spacing:-0.90px">c</span><span style="letter-spacing:0.80px">t</span><span style="letter-spacing:0.45px">i</span><span style="letter-spacing:0.10px">v</span><span style="letter-spacing:-0.55px">e</span><span style="letter-spacing:-0.20px">,</span></div>
<div class="t" style="left:255.3px;top:283px;width:242px;overflow:hidden"><b style="margin-left:6px"><span style="letter-spacing:0.50px">(</span><span style="letter-spacing:-0.85px">C</span><span style="letter-spacing:-0.60px">:</span><span style="letter-spacing:0.50px">)</span></b></div>
<div class="t" style="left:255.3px;top:298px;width:242px;overflow:hidden"><span style="letter-spacing:-0.55px">40</span><span style="letter-spacing:-0.20px">.</span><span style="letter-spacing:-0.55px">00</span><span style="letter-spacing:-0.20px"> </span><span style="letter-spacing:-1.20px">G</span><span style="letter-spacing:-0.90px">B</span><span style="letter-spacing:-0.20px"> </span><span style="letter-spacing:0.45px">N</span><span style="letter-spacing:-1.20px">TF</span><span style="letter-spacing:-1.90px">S</span></div>
<div class="t" style="left:255.3px;top:313px;width:242px;overflow:hidden"><span style="letter-spacing:0.45px">H</span><span style="letter-spacing:-0.55px">ea</span><span style="letter-spacing:0.45px">l</span><span style="letter-spacing:0.80px">t</span><span style="letter-spacing:0.45px">h</span><span style="letter-spacing:0.10px">y</span><span style="letter-spacing:-0.20px"> </span><span style="letter-spacing:0.10px">(</span><span style="letter-spacing:-0.90px">B</span><span style="letter-spacing:0.45px">oo</span><span style="letter-spacing:0.80px">t</span><span style="letter-spacing:-0.20px">, </span><span style="letter-spacing:-0.90px">P</span><span style="letter-spacing:-0.55px">a</span><span style="letter-spacing:0.45px">g</span><span style="letter-spacing:-0.55px">e</span><span style="letter-spacing:-0.20px"> </span><span style="letter-spacing:-1.20px">F</span><span style="letter-spacing:0.45px">il</span><span style="letter-spacing:-0.55px">e</span><span style="letter-spacing:-0.20px">, </span><span style="letter-spacing:-1.55px">C</span><span style="letter-spacing:0.10px">r</span><span style="letter-spacing:-0.55px">a</span><span style="letter-spacing:-0.90px">s</span><span style="letter-spacing:0.45px">h</span><span style="letter-spacing:-0.20px"> </span><span style="letter-spacing:-0.55px">D</span><span style="letter-spacing:0.45px">u</span><span style="letter-spacing:0.10px">m</span><span style="letter-spacing:0.45px">p</span><span style="letter-spacing:-0.20px">, </span><span style="letter-spacing:-0.90px">P</span><span style="letter-spacing:0.10px">r</span><span style="letter-spacing:0.45px">i</span><span style="letter-spacing:0.10px">m</span><span style="letter-spacing:-0.55px">a</span><span style="letter-spacing:0.10px">r</span></div>
<div class="t" style="left:512.3px;top:283px;height:15px;background:#fff;padding-right:2px"><b style="margin-left:6px;margin-right:2px"><span style="letter-spacing:0.50px">(</span><span style="letter-spacing:0.25px">D</span><span style="letter-spacing:-0.60px">:</span><span style="letter-spacing:0.50px">)</span></b></div>
<div class="t" style="left:512.3px;top:298px;height:15px;background:#fff;padding-right:2px"><span style="letter-spacing:-0.55px">50</span><span style="letter-spacing:-0.20px">.</span><span style="letter-spacing:-0.55px">00</span><span style="letter-spacing:-0.20px"> </span><span style="letter-spacing:-1.20px">G</span><span style="letter-spacing:-0.90px">B</span><span style="letter-spacing:-0.20px"> </span><span style="letter-spacing:0.45px">N</span><span style="letter-spacing:-1.20px">TF</span><span style="letter-spacing:-1.90px">S</span></div>
<div class="t" style="left:512.3px;top:313px;height:15px;background:#fff;padding-right:2px"><span style="letter-spacing:0.45px">H</span><span style="letter-spacing:-0.55px">ea</span><span style="letter-spacing:0.45px">l</span><span style="letter-spacing:0.80px">t</span><span style="letter-spacing:0.45px">h</span><span style="letter-spacing:0.10px">y</span><span style="letter-spacing:-0.20px"> </span><span style="letter-spacing:0.10px">(</span><span style="letter-spacing:-0.90px">P</span><span style="letter-spacing:0.10px">r</span><span style="letter-spacing:0.45px">i</span><span style="letter-spacing:0.10px">m</span><span style="letter-spacing:-0.55px">a</span><span style="letter-spacing:0.10px">ry</span><span style="letter-spacing:-0.20px"> </span><span style="letter-spacing:-0.90px">P</span><span style="letter-spacing:-0.55px">a</span><span style="letter-spacing:0.10px">r</span><span style="letter-spacing:0.80px">t</span><span style="letter-spacing:0.45px">i</span><span style="letter-spacing:0.80px">t</span><span style="letter-spacing:0.45px">ion</span><span style="letter-spacing:0.10px">)</span></div>
<div class="t" style="left:774.3px;top:298px;width:226px;overflow:hidden"><span style="letter-spacing:-0.55px">20</span><span style="letter-spacing:-0.20px">.</span><span style="letter-spacing:-0.55px">00</span><span style="letter-spacing:-0.20px"> </span><span style="letter-spacing:-1.20px">G</span><span style="letter-spacing:-0.90px">B</span></div>
<div class="t" style="left:774.3px;top:313px;width:226px;overflow:hidden"><span style="letter-spacing:-0.55px">U</span><span style="letter-spacing:0.45px">n</span><span style="letter-spacing:-0.55px">a</span><span style="letter-spacing:0.45px">llo</span><span style="letter-spacing:-0.90px">c</span><span style="letter-spacing:-0.55px">a</span><span style="letter-spacing:0.80px">t</span><span style="letter-spacing:-0.55px">e</span><span style="letter-spacing:0.45px">d</span></div>
<div class="t" style="left:1018.3px;top:283px;width:244px;overflow:hidden"><b style="margin-left:6px"><span style="letter-spacing:0.50px">(</span><span style="letter-spacing:-1.30px">E</span><span style="letter-spacing:-0.60px">:</span><span style="letter-spacing:0.50px">)</span></b></div>
<div class="t" style="left:1018.3px;top:298px;width:244px;overflow:hidden"><span style="letter-spacing:-0.55px">49</span><span style="letter-spacing:-0.20px">.</span><span style="letter-spacing:-0.55px">66</span><span style="letter-spacing:-0.20px"> </span><span style="letter-spacing:-1.20px">G</span><span style="letter-spacing:-0.90px">B</span><span style="letter-spacing:-0.20px"> </span><span style="letter-spacing:0.45px">N</span><span style="letter-spacing:-1.20px">TF</span><span style="letter-spacing:-1.90px">S</span></div>
<div class="t" style="left:1018.3px;top:313px;width:244px;overflow:hidden"><span style="letter-spacing:0.45px">H</span><span style="letter-spacing:-0.55px">ea</span><span style="letter-spacing:0.45px">l</span><span style="letter-spacing:0.80px">t</span><span style="letter-spacing:0.45px">h</span><span style="letter-spacing:0.10px">y</span><span style="letter-spacing:-0.20px"> </span><span style="letter-spacing:0.10px">(</span><span style="letter-spacing:-0.55px">L</span><span style="letter-spacing:0.45px">ogi</span><span style="letter-spacing:-0.90px">c</span><span style="letter-spacing:-0.55px">a</span><span style="letter-spacing:0.45px">l</span><span style="letter-spacing:-0.20px"> </span><span style="letter-spacing:-0.55px">D</span><span style="letter-spacing:0.10px">r</span><span style="letter-spacing:0.45px">i</span><span style="letter-spacing:0.10px">v</span><span style="letter-spacing:-0.55px">e</span><span style="letter-spacing:0.10px">)</span></div>
<div class="a" style="left:3px;top:454px;width:100px;height:1px;background:#fff"></div>
<div class="a" style="left:102px;top:357px;width:1px;height:97px;background:#fff"></div>
<div class="a" style="left:2px;top:454px;width:103px;height:1px;background:#a0a0a0"></div>
<div class="a" style="left:105px;top:453px;width:1169px;height:1px;background:#a0a0a0"></div>
<svg style="left:12px;top:358px" width="18" height="20"><circle cx="11.2" cy="7.5" r="4.8" fill="#f0f0f4" stroke="#9a9aa0" stroke-width="1"/><path d="M11.5 4 L14.5 10" stroke="#c8c8d0" stroke-width="1.2"/><rect x="7" y="6" width="2.2" height="2.5" fill="#30e030"/><rect x="13" y="8.5" width="1.5" height="1.5" fill="#e8c870"/><path d="M2.5 12.5 L4 11 H14 L15.5 12.5" fill="#e0e0e0" stroke="#b0b0b0" stroke-width="0.8"/><rect x="0.5" y="12.5" width="16" height="6" rx="1" fill="#d0d0d4" stroke="#707070" stroke-width="1"/><rect x="2.5" y="13.2" width="9" height="4" fill="#e0e0ec"/><rect x="2.5" y="14.6" width="8" height="1" fill="#606068"/><rect x="11.5" y="13.2" width="3" height="4" fill="#3a3040"/><rect x="12.3" y="13.6" width="1.5" height="3.2" fill="#30e030"/></svg>
<div class="t b" style="left:28.3px;top:365px;"><span style="letter-spacing:-0.85px">C</span><span style="letter-spacing:0.25px">D</span><span style="letter-spacing:0.50px">-</span><span style="letter-spacing:-0.85px">R</span><span style="letter-spacing:0.70px">O</span><span style="letter-spacing:1.10px">M</span><span style="letter-spacing:0.10px"> </span><span style="letter-spacing:0.05px">0</span></div>
<div class="t" style="left:10.3px;top:380px;"><span style="letter-spacing:-0.55px">D</span><span style="letter-spacing:0.10px">V</span><span style="letter-spacing:-0.55px">D</span><span style="letter-spacing:-0.20px"> </span><span style="letter-spacing:0.10px">(</span><span style="letter-spacing:0.45px">H</span><span style="letter-spacing:-0.20px">:</span><span style="letter-spacing:0.10px">)</span></div>
<div class="t" style="left:10.3px;top:410px;"><span style="letter-spacing:0.45px">No</span><span style="letter-spacing:-0.20px"> </span><span style="letter-spacing:0.10px">M</span><span style="letter-spacing:-0.55px">e</span><span style="letter-spacing:0.45px">di</span><span style="letter-spacing:-0.55px">a</span></div>
<div class="a" style="left:2px;top:683px;width:1273px;height:1px;background:#fff"></div>
<div class="a" style="left:1273px;top:683px;width:1px;height:20px;background:#a0a0a0"></div>
<div class="a" style="left:1px;top:702px;width:1275px;height:1px;background:#a0a0a0"></div>
<div class="a" style="left:0px;top:703px;width:1276px;height:2px;background:#f0f0f0"></div>
<div class="a" style="left:0px;top:705px;width:1276px;height:1px;background:#a0a0a0"></div>
<div class="a" style="left:7px;top:686px;width:12px;height:13px;background:#000000;border:1px solid #fff"></div>
<div class="t" style="left:22.3px;top:686px;"><span style="letter-spacing:-0.55px">U</span><span style="letter-spacing:0.45px">n</span><span style="letter-spacing:-0.55px">a</span><span style="letter-spacing:0.45px">llo</span><span style="letter-spacing:-0.90px">c</span><span style="letter-spacing:-0.55px">a</span><span style="letter-spacing:0.80px">t</span><span style="letter-spacing:-0.55px">e</span><span style="letter-spacing:0.45px">d</span></div>
<div class="a" style="left:92px;top:686px;width:12px;height:13px;background:#000080;border:1px solid #fff"></div>
<div class="t" style="left:106.3px;top:686px;"><span style="letter-spacing:-0.90px">P</span><span style="letter-spacing:0.10px">r</span><span style="letter-spacing:0.45px">i</span><span style="letter-spacing:0.10px">m</span><span style="letter-spacing:-0.55px">a</span><span style="letter-spacing:0.10px">ry</span><span style="letter-spacing:-0.20px"> </span><span style="letter-spacing:0.45px">p</span><span style="letter-spacing:-0.55px">a</span><span style="letter-spacing:0.10px">r</span><span style="letter-spacing:0.80px">t</span><span style="letter-spacing:0.45px">i</span><span style="letter-spacing:0.80px">t</span><span style="letter-spacing:0.45px">ion</span></div>
<div class="a" style="left:202px;top:686px;width:12px;height:13px;background:#008000;border:1px solid #fff"></div>
<div class="t" style="left:216.3px;top:686px;"><span style="letter-spacing:-1.90px">E</span><span style="letter-spacing:0.10px">x</span><span style="letter-spacing:0.80px">t</span><span style="letter-spacing:-0.55px">e</span><span style="letter-spacing:0.45px">nd</span><span style="letter-spacing:-0.55px">e</span><span style="letter-spacing:0.45px">d</span><span style="letter-spacing:-0.20px"> </span><span style="letter-spacing:0.45px">p</span><span style="letter-spacing:-0.55px">a</span><span style="letter-spacing:0.10px">r</span><span style="letter-spacing:0.80px">t</span><span style="letter-spacing:0.45px">i</span><span style="letter-spacing:0.80px">t</span><span style="letter-spacing:0.45px">ion</span></div>
<div class="a" style="left:318px;top:686px;width:12px;height:13px;background:#00ff00;border:1px solid #fff"></div>
<div class="t" style="left:332.3px;top:686px;"><span style="letter-spacing:-1.20px">F</span><span style="letter-spacing:0.10px">r</span><span style="letter-spacing:-0.55px">ee</span><span style="letter-spacing:-0.20px"> </span><span style="letter-spacing:-0.90px">s</span><span style="letter-spacing:0.45px">p</span><span style="letter-spacing:-0.55px">a</span><span style="letter-spacing:-0.90px">c</span><span style="letter-spacing:-0.55px">e</span></div>
<div class="a" style="left:395px;top:686px;width:12px;height:13px;background:#0000ff;border:1px solid #fff"></div>
<div class="t" style="left:409.3px;top:686px;"><span style="letter-spacing:-0.55px">L</span><span style="letter-spacing:0.45px">ogi</span><span style="letter-spacing:-0.90px">c</span><span style="letter-spacing:-0.55px">a</span><span style="letter-spacing:0.45px">l</span><span style="letter-spacing:-0.20px"> </span><span style="letter-spacing:0.45px">d</span><span style="letter-spacing:0.10px">r</span><span style="letter-spacing:0.45px">i</span><span style="letter-spacing:0.10px">v</span><span style="letter-spacing:-0.55px">e</span></div>
<div class="a" style="left:0px;top:706px;width:1276px;height:21px;background:#fff"></div>
<div class="a" style="left:0px;top:705px;width:1px;height:22px;background:#aaa"></div>
<div class="a" style="left:1055px;top:706px;width:1px;height:21px;background:#e0e0e0"></div>
<div class="a" style="left:1273px;top:706px;width:1px;height:21px;background:#d0d0d0"></div>
<div class="a" style="left:1188px;top:706px;width:1px;height:21px;background:#e0e0e0"></div>
<div class="a" style="left:0px;top:727px;width:1280px;height:2px;background:#404448"></div>
<div class="a" style="left:0px;top:729px;width:1280px;height:39px;background:#67c9e9"></div>
<div class="a" style="left:202px;top:728px;width:60px;height:40px;background:#78cfee;border:1px solid #1e3a44"></div>
<div class="a" style="left:264px;top:728px;width:60px;height:40px;background:#a2dff4;border:1px solid #1e3a44"></div>
<svg style="left:29px;top:731px" width="34" height="34">
<rect x="1.5" y="1.5" width="15" height="28" fill="#1f86d6" stroke="#fff" stroke-width="1.3"/>
<line x1="1.5" y1="9" x2="16.5" y2="9" stroke="#fff" stroke-width="1.2"/>
<path d="M16 19 V16.5 Q16 15.5 17 15.5 H23 Q24 15.5 24 16.5 V19" fill="#6f8599" stroke="#fff" stroke-width="1.3"/>
<rect x="6.5" y="19" width="26" height="13.5" rx="1.5" fill="#6f8599" stroke="#fff" stroke-width="1.3"/>
<line x1="10" y1="23.5" x2="29" y2="23.5" stroke="#fff" stroke-width="1.2"/>
<circle cx="11.5" cy="23.5" r="1.3" fill="#fff"/><circle cx="27.5" cy="23.5" r="1.3" fill="#fff"/>
</svg>
<svg style="left:95px;top:737px" width="28" height="22">
<defs><linearGradient id="psg" x1="0" y1="0" x2="1" y2="1"><stop offset="0" stop-color="#5aa6e6"/><stop offset="0.5" stop-color="#2a6cc0"/><stop offset="1" stop-color="#1a4e9a"/></linearGradient></defs>
<path d="M7 0.7 H26 Q27.6 0.7 27.2 2.2 L22.3 19.8 Q21.9 21.3 20.5 21.3 H2 Q0.4 21.3 0.8 19.8 L5.6 2.2 Q6 0.7 7 0.7Z" fill="url(#psg)" stroke="#2a5a90" stroke-width="1"/>
<path d="M7.5 5.5 L14 10.5 L6.5 16" fill="none" stroke="#fff" stroke-width="2.3"/>
<path d="M12.5 16.8 H18.5" stroke="#fff" stroke-width="1.6"/>
</svg>
<svg style="left:154px;top:734px" width="33" height="30">
<defs><linearGradient id="fg" x1="0" y1="0" x2="0" y2="1"><stop offset="0" stop-color="#fbeaa8"/><stop offset="1" stop-color="#e9c45a"/></linearGradient>
<linearGradient id="tg" x1="0" y1="0" x2="0" y2="1"><stop offset="0" stop-color="#d8f0ff"/><stop offset="1" stop-color="#5ab0e8"/></linearGradient></defs>
<path d="M1 3 Q1 1 3 1 H11 L13 3 H30 Q31.5 3 31.5 5 V8 H1Z" fill="#e8c24e" stroke="#c09a30" stroke-width="0.8"/>
<rect x="4" y="2" width="4" height="2" fill="#2ec02e"/><rect x="12" y="4" width="4" height="2" fill="#d83030"/><rect x="20" y="6" width="4" height="2" fill="#3a8ad8"/>
<rect x="1" y="7.5" width="30.5" height="21" rx="1" fill="url(#fg)" stroke="#c09a30" stroke-width="0.8"/>
<path d="M5 29 V19.5 Q5 17 8 17 H24.5 Q27.5 17 27.5 19.5 V29 H22.5 V23.5 H10 V29Z" fill="url(#tg)" stroke="#3a8ad0" stroke-width="1"/>
</svg>
<svg style="left:216px;top:731px" width="33" height="33">
<defs><linearGradient id="dcb" x1="0" y1="0" x2="0" y2="1"><stop offset="0" stop-color="#5aa8e0"/><stop offset="1" stop-color="#0e4888"/></linearGradient>
<linearGradient id="dcd" x1="0" y1="0" x2="1" y2="0.3"><stop offset="0" stop-color="#ffffff"/><stop offset="0.45" stop-color="#e8e8e8"/><stop offset="1" stop-color="#a0a0a0"/></linearGradient></defs>
<path d="M4 1 H28 Q29.5 1 29.7 2.5 L31.5 27 Q31.6 31.5 27.5 31.5 H4.5 Q0.4 31.5 0.5 27 L2.3 2.5 Q2.5 1 4 1Z" fill="#eef0f2" stroke="#b0bac2" stroke-width="1"/>
<path d="M4.3 3.2 H27.7 L29.3 25 H2.7Z" fill="url(#dcb)"/>
<path d="M5 4 H13 L11 8 H5Z" fill="#d8e8f4" opacity="0.8"/>
<ellipse cx="15.8" cy="16.3" rx="12" ry="8.7" fill="url(#dcd)"/>
<polygon points="15.77,19.91 12.23,16.09 21.23,7.79 24.77,11.61" fill="#2aa0e8"/>
<polygon points="21.23,7.79 24.77,11.61 26.61,9.91 23.07,6.09" fill="#b0e4fa"/>
<polygon points="14.27,21.41 10.73,17.59 12.23,16.09 15.77,19.91" fill="#f0d070"/>
<polygon points="14.27,21.41 10.73,17.59 10.3,21.8" fill="#303438"/>
<path d="M1.2 27.6 H30.8" stroke="#3aa0e0" stroke-width="1.3"/>
<path d="M1.5 29.8 H30.5" stroke="#fafafa" stroke-width="1.2"/>
</svg>
<svg style="left:274px;top:729px" width="38" height="36">
<defs><linearGradient id="dmb" x1="0" y1="0" x2="0" y2="1"><stop offset="0" stop-color="#d0d8de"/><stop offset="1" stop-color="#7e8c96"/></linearGradient></defs>
<polygon points="4,17.5 23,18.5 23,32.5 4,31.5" fill="url(#dmb)" stroke="#6a7680" stroke-width="0.8"/>
<polygon points="23,18.5 28,16.5 28,30.5 23,32.5" fill="#8a98a2" stroke="#6a7680" stroke-width="0.8"/>
<ellipse cx="8.5" cy="23.5" rx="1" ry="1.8" fill="#f4f4f4"/><ellipse cx="17" cy="25" rx="1" ry="1.8" fill="#f4f4f4"/>
<polygon points="5.2,10.6 20.8,4.7 35.4,8.2 21.3,14.5" fill="#eeeef0" stroke="#8a8a90" stroke-width="0.8"/>
<polygon points="5.2,10.6 21.3,14.5 21.3,18.5 5.2,14.8" fill="#c4c4c8" stroke="#7a7a80" stroke-width="0.8"/>
<polygon points="21.3,14.5 35.4,8.2 35.4,12.2 21.3,18.5" fill="#a8a8ae" stroke="#7a7a80" stroke-width="0.8"/>
<rect x="20" y="14.8" width="2.2" height="3.6" fill="#30e030"/>
<path d="M11 20.5 Q14.5 14 20 20" fill="none" stroke="#111" stroke-width="1.5"/>
</svg>
<svg style="left:1126px;top:745px" width="9" height="6"><path d="M1 5 L4.5 1 L8 5Z" fill="#231a1a"/></svg>
<svg style="left:1146px;top:739px" width="19" height="17">
<path d="M7 2.5 H16.5 V11.5 H7 M9 14.5 H14.5 M11.75 11.5 V14.5 M4.5 8 V15 M3 1.5 H6 Q6.5 1.5 6.5 2.5 V7 Q6.5 8 5.5 8 H3.5 Q2.5 8 2.5 7 V2.5 Q2.5 1.5 3 1.5Z" fill="none" stroke="#1e4a5a" stroke-width="3" stroke-linejoin="round"/>
<path d="M7 2.5 H16.5 V11.5 H7 M9 14.5 H14.5 M11.75 11.5 V14.5 M4.5 8 V15 M3 1.5 H6 Q6.5 1.5 6.5 2.5 V7 Q6.5 8 5.5 8 H3.5 Q2.5 8 2.5 7 V2.5 Q2.5 1.5 3 1.5Z" fill="none" stroke="#fff" stroke-width="1.4"/>
</svg>
<svg style="left:1170px;top:739px" width="20" height="18">
<path d="M1.5 5.5 H4.5 L9 1 V16.5 L4.5 12 H1.5Z" fill="#fff" stroke="#1e4a5a" stroke-width="1"/>
<path d="M4.5 5.5 V12" stroke="#1e4a5a" stroke-width="0.8"/>
<circle cx="12.7" cy="12" r="4.6" fill="#e02424" stroke="#c01818" stroke-width="0.8"/>
<path d="M10.7 10 L14.7 14 M14.7 10 L10.7 14" stroke="#fff" stroke-width="1.6"/>
</svg>
<div class="t" style="left:1205px;top:733px;letter-spacing:-0.2px">10:34 AM</div>
<div class="t" style="left:1204px;top:750px;letter-spacing:-0.3px">5/21/2019</div>
<div class="a" style="left:0px;top:767px;width:1280px;height:1px;background:#2a3a40"></div>
<div class="a" style="left:581px;top:332px;width:258px;height:264px;background:#f0f0f0;border:1px solid #979797"></div>
<div class="a" style="left:582px;top:333px;width:256px;height:262px;border:1px solid #f8f8f8"></div>
<div class="a" style="left:611px;top:336px;width:1px;height:257px;background:#c2c2c2"></div>
<div class="a" style="left:612px;top:380px;width:223px;height:1px;background:#c2c2c2"></div>
<div class="a" style="left:612px;top:450px;width:223px;height:1px;background:#c2c2c2"></div>
<div class="a" style="left:612px;top:542px;width:223px;height:1px;background:#c2c2c2"></div>
<div class="a" style="left:612px;top:568px;width:223px;height:1px;background:#c2c2c2"></div>
<div class="a" style="left:584px;top:453px;width:252px;height:22px;background:#dfecfb;border:1px solid #26a0da"></div>
<div class="t" style="left:615.3px;top:339px;"><span style="letter-spacing:-0.20px">O</span><span style="letter-spacing:0.45px">p</span><span style="letter-spacing:-0.55px">e</span><span style="letter-spacing:0.45px">n</span></div>
<div class="t" style="left:615.3px;top:361px;"><span style="letter-spacing:-1.90px">E</span><span style="letter-spacing:0.10px">x</span><span style="letter-spacing:0.45px">plo</span><span style="letter-spacing:0.10px">r</span><span style="letter-spacing:-0.55px">e</span></div>
<div class="t" style="left:615.3px;top:387px;"><span style="letter-spacing:0.10px">M</span><span style="letter-spacing:-0.55px">a</span><span style="letter-spacing:0.10px">rk</span><span style="letter-spacing:-0.20px"> </span><span style="letter-spacing:-0.90px">P</span><span style="letter-spacing:-0.55px">a</span><span style="letter-spacing:0.10px">r</span><span style="letter-spacing:0.80px">t</span><span style="letter-spacing:0.45px">i</span><span style="letter-spacing:0.80px">t</span><span style="letter-spacing:0.45px">ion</span><span style="letter-spacing:-0.20px"> </span><span style="letter-spacing:-0.55px">a</span><span style="letter-spacing:-0.90px">s</span><span style="letter-spacing:-0.20px"> </span><span style="letter-spacing:0.10px">A</span><span style="letter-spacing:-0.90px">c</span><span style="letter-spacing:0.80px">t</span><span style="letter-spacing:0.45px">i</span><span style="letter-spacing:0.10px">v</span><span style="letter-spacing:-0.55px">e</span></div>
<div class="t" style="left:615.3px;top:409px;"><span style="letter-spacing:-1.55px">C</span><span style="letter-spacing:0.45px">h</span><span style="letter-spacing:-0.55px">a</span><span style="letter-spacing:0.45px">ng</span><span style="letter-spacing:-0.55px">e</span><span style="letter-spacing:-0.20px"> </span><span style="letter-spacing:-0.55px">D</span><span style="letter-spacing:0.10px">r</span><span style="letter-spacing:0.45px">i</span><span style="letter-spacing:0.10px">v</span><span style="letter-spacing:-0.55px">e</span><span style="letter-spacing:-0.20px"> </span><span style="letter-spacing:-0.55px">Le</span><span style="letter-spacing:0.80px">tt</span><span style="letter-spacing:-0.55px">e</span><span style="letter-spacing:0.10px">r</span><span style="letter-spacing:-0.20px"> </span><span style="letter-spacing:-0.55px">a</span><span style="letter-spacing:0.45px">nd</span><span style="letter-spacing:-0.20px"> </span><span style="letter-spacing:-0.90px">P</span><span style="letter-spacing:-0.55px">a</span><span style="letter-spacing:0.80px">t</span><span style="letter-spacing:0.45px">h</span><span style="letter-spacing:-0.90px">s</span><span style="letter-spacing:-0.20px">...</span></div>
<div class="t" style="left:615.3px;top:431px;"><span style="letter-spacing:-1.20px">F</span><span style="letter-spacing:0.45px">o</span><span style="letter-spacing:0.10px">rm</span><span style="letter-spacing:-0.55px">a</span><span style="letter-spacing:0.80px">t</span><span style="letter-spacing:-0.20px">...</span></div>
<div class="t" style="left:615.3px;top:457px;"><span style="letter-spacing:-1.90px">E</span><span style="letter-spacing:0.10px">x</span><span style="letter-spacing:0.80px">t</span><span style="letter-spacing:-0.55px">e</span><span style="letter-spacing:0.45px">nd</span><span style="letter-spacing:-0.20px"> </span><span style="letter-spacing:0.10px">V</span><span style="letter-spacing:0.45px">olu</span><span style="letter-spacing:0.10px">m</span><span style="letter-spacing:-0.55px">e</span><span style="letter-spacing:-0.20px">...</span></div>
<div class="t" style="left:615.3px;top:479px;"><span style="letter-spacing:-1.90px">S</span><span style="letter-spacing:0.45px">h</span><span style="letter-spacing:0.10px">r</span><span style="letter-spacing:0.45px">in</span><span style="letter-spacing:0.10px">k</span><span style="letter-spacing:-0.20px"> </span><span style="letter-spacing:0.10px">V</span><span style="letter-spacing:0.45px">olu</span><span style="letter-spacing:0.10px">m</span><span style="letter-spacing:-0.55px">e</span><span style="letter-spacing:-0.20px">...</span></div>
<div class="t" style="left:615.3px;top:501px;color:#6d6d6d"><span style="letter-spacing:0.10px">A</span><span style="letter-spacing:0.45px">dd</span><span style="letter-spacing:-0.20px"> </span><span style="letter-spacing:0.10px">M</span><span style="letter-spacing:0.45px">i</span><span style="letter-spacing:0.10px">rr</span><span style="letter-spacing:0.45px">o</span><span style="letter-spacing:0.10px">r</span><span style="letter-spacing:-0.20px">...</span></div>
<div class="t" style="left:615.3px;top:523px;"><span style="letter-spacing:-0.55px">De</span><span style="letter-spacing:0.45px">l</span><span style="letter-spacing:-0.55px">e</span><span style="letter-spacing:0.80px">t</span><span style="letter-spacing:-0.55px">e</span><span style="letter-spacing:-0.20px"> </span><span style="letter-spacing:0.10px">V</span><span style="letter-spacing:0.45px">olu</span><span style="letter-spacing:0.10px">m</span><span style="letter-spacing:-0.55px">e</span><span style="letter-spacing:-0.20px">...</span></div>
<div class="t" style="left:615.3px;top:549px;"><span style="letter-spacing:-0.90px">P</span><span style="letter-spacing:0.10px">r</span><span style="letter-spacing:0.45px">op</span><span style="letter-spacing:-0.55px">e</span><span style="letter-spacing:0.10px">r</span><span style="letter-spacing:0.80px">t</span><span style="letter-spacing:0.45px">i</span><span style="letter-spacing:-0.55px">e</span><span style="letter-spacing:-0.90px">s</span></div>
<div class="t" style="left:615.3px;top:575px;"><span style="letter-spacing:0.45px">H</span><span style="letter-spacing:-0.55px">e</span><span style="letter-spacing:0.45px">lp</span></div>
</body></html>
